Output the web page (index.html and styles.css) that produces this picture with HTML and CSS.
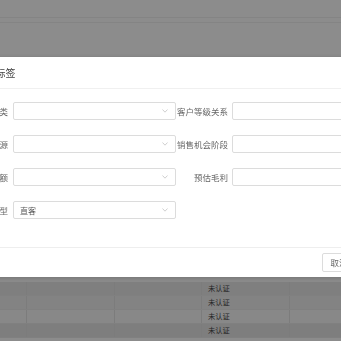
FILE: index.html
```html
<!DOCTYPE html>
<html lang="zh-CN">
<head>
<meta charset="utf-8">
<link rel="stylesheet" href="styles.css">
</head>
<body>
<div class="page">
  <div class="strip strip-a"></div>
  <div class="strip strip-b"></div>
  <div class="spacer"></div>
  <div class="trow r1"><div class="cell"></div><div class="cell"></div><div class="cell"></div><div class="cell">未认证</div><div class="cell last"></div></div>
  <div class="trow r2"><div class="cell"></div><div class="cell"></div><div class="cell"></div><div class="cell">未认证</div><div class="cell last"></div></div>
  <div class="trow r3"><div class="cell"></div><div class="cell"></div><div class="cell"></div><div class="cell">未认证</div><div class="cell last"></div></div>
  <div class="trow r4"><div class="cell"></div><div class="cell"></div><div class="cell"></div><div class="cell">未认证</div><div class="cell last"></div></div>
</div>
<div class="mask"></div>
<div class="dialog">
  <div class="dlg-head">标签</div>
  <div class="dlg-body">
    <div class="label">客户分类</div>
    <div class="select"><span class="val"></span><svg class="arrow" width="6" height="4" viewBox="0 0 6 4"><path d="M0.5 0.5 L3 3.2 L5.5 0.5" fill="none" stroke="#c4c4c4" stroke-width="0.8"/></svg></div>
    <div class="label">客户等级关系</div>
    <div class="input"></div>

    <div class="label">客户来源</div>
    <div class="select"><span class="val"></span><svg class="arrow" width="6" height="4" viewBox="0 0 6 4"><path d="M0.5 0.5 L3 3.2 L5.5 0.5" fill="none" stroke="#c4c4c4" stroke-width="0.8"/></svg></div>
    <div class="label">销售机会阶段</div>
    <div class="input"></div>

    <div class="label">预估金额</div>
    <div class="select"><span class="val"></span><svg class="arrow" width="6" height="4" viewBox="0 0 6 4"><path d="M0.5 0.5 L3 3.2 L5.5 0.5" fill="none" stroke="#c4c4c4" stroke-width="0.8"/></svg></div>
    <div class="label">预估毛利</div>
    <div class="input"></div>

    <div class="label">客户类型</div>
    <div class="select"><span class="val">直客</span><svg class="arrow" width="6" height="4" viewBox="0 0 6 4"><path d="M0.5 0.5 L3 3.2 L5.5 0.5" fill="none" stroke="#c4c4c4" stroke-width="0.8"/></svg></div>
  </div>
  <div class="dlg-foot">
    <div class="btn">取消</div>
    <div class="btn primary">确定</div>
  </div>
</div>
</body>
</html>
```
FILE: styles.css
```css
html, body {
  margin: 0;
  padding: 0;
  width: 341px;
  height: 341px;
  overflow: hidden;
  background: #ffffff;
  font-family: "Noto Sans CJK SC", "Noto Sans", sans-serif;
}

.page {
  width: 341px;
}

.strip {
  border-bottom: 1px solid #f1f1f1;
}
.strip-a { height: 17px; }
.strip-b { height: 4px; }

.spacer { height: 259px; }

.trow {
  display: grid;
  grid-template-columns: 27px 88px 87px 88px 1fr;
  height: 13px;
  border-bottom: 1px solid #e9e9e9;
}
.r1 { background: #e8e8e8; }
.r2 { background: #efefef; }
.r3 { background: #f8f8f8; }
.r4 { background: #e6e6e6; }

.cell {
  border-right: 1px solid #e2e2e2;
  font-size: 7.3px;
  line-height: 13px;
  color: #444;
  padding-left: 6px;
  white-space: nowrap;
}
.cell.last { border-right: none; }

.mask {
  position: fixed;
  inset: 0;
  background: rgba(0, 0, 0, 0.45);
}

.dialog {
  position: absolute;
  top: 57px;
  left: -43px;
  width: 480px;
  background: #ffffff;
  border-radius: 2px;
  box-shadow: 0 1px 4px rgba(0, 0, 0, 0.18);
}

.dlg-head {
  height: 31px;
  line-height: 31px;
  padding-left: 38.5px;
  font-size: 10px;
  color: #444;
  border-bottom: 1px solid #f0f0f0;
}

.dlg-body {
  display: grid;
  grid-template-columns: 56px 163px 56px 163px;
  grid-auto-rows: 18px;
  row-gap: 15px;
  padding: 13px 0 28px 0;
}

.label {
  font-size: 8.5px;
  line-height: 18px;
  color: #666;
  text-align: right;
  padding-right: 5px;
  white-space: nowrap;
}

.label:nth-child(4n+3) {
  padding-right: 4px;
}

.select, .input {
  box-sizing: border-box;
  height: 18px;
  border: 1px solid #dcdcdc;
  border-radius: 2px;
  display: flex;
  align-items: center;
  justify-content: space-between;
}

.select .val {
  padding-left: 6px;
  font-size: 8px;
  color: #555;
}

.select .arrow {
  margin-right: 7px;
}

.dlg-foot {
  border-top: 1px solid #eeeeee;
  padding: 5px 41px 5px 0;
  display: flex;
  justify-content: flex-end;
  gap: 6px;
}

.btn {
  box-sizing: border-box;
  width: 34px;
  height: 19px;
  border: 1px solid #dcdcdc;
  border-radius: 2px;
  font-size: 8.5px;
  line-height: 17px;
  text-align: center;
  color: #666;
}
.btn.primary {
  background: #1890ff;
  border-color: #1890ff;
  color: #fff;
}
```
